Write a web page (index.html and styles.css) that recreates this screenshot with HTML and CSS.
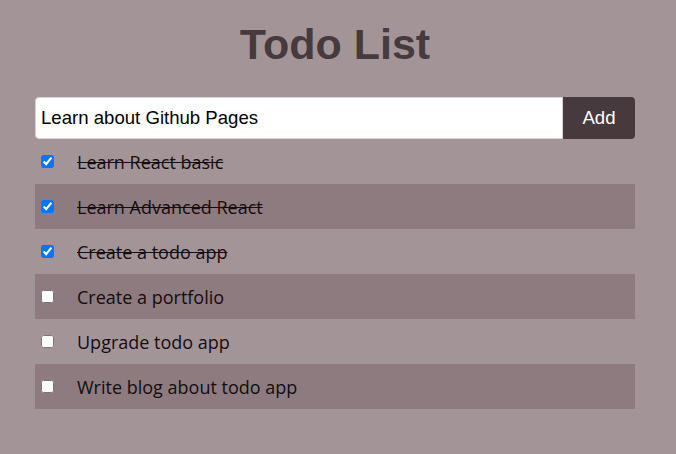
FILE: index.html
```html
<!DOCTYPE html>
<html>
<head>
<meta charset="utf-8">
<link rel="stylesheet" href="styles.css">
</head>
<body>
<div class="app">
  <h1 class="title">Todo List</h1>
  <form class="add-form">
    <input class="add-input" type="text" value="Learn about Github Pages">
    <button class="add-btn" type="button">Add</button>
  </form>
  <ul class="list">
    <li class="item"><input type="checkbox" checked><span class="label done">Learn React basic</span></li>
    <li class="item alt"><input type="checkbox" checked><span class="label done">Learn Advanced React</span></li>
    <li class="item"><input type="checkbox" checked><span class="label done">Create a todo app</span></li>
    <li class="item alt"><input type="checkbox"><span class="label">Create a portfolio</span></li>
    <li class="item"><input type="checkbox"><span class="label">Upgrade todo app</span></li>
    <li class="item alt"><input type="checkbox"><span class="label">Write blog about todo app</span></li>
  </ul>
</div>
</body>
</html>
```
FILE: styles.css
```css
html, body {
  margin: 0;
  padding: 0;
  background: #a39597;
}
.app {
  width: 600px;
  margin: 0 0 0 35px;
  padding-top: 19px;
}
.title {
  margin: 0 0 28px;
  text-align: center;
  font-family: "Liberation Sans", Arial, sans-serif;
  font-weight: bold;
  font-size: 43px;
  line-height: 50px;
  color: #463a3e;
}
.add-form {
  display: flex;
  height: 42px;
  margin: 0;
}
.add-input {
  flex: 1;
  margin: 0;
  border: 1px solid #d8d2d3;
  border-radius: 4px 0 0 4px;
  padding: 0 5px;
  font-family: "Liberation Sans", Arial, sans-serif;
  font-size: 18.6px;
  color: #000;
  background: #fff;
  outline: none;
}
.add-btn {
  width: 72px;
  margin: 0;
  border: none;
  border-radius: 0 4px 4px 0;
  background: #463a3e;
  color: #fff;
  font-family: "Liberation Sans", Arial, sans-serif;
  font-size: 18.6px;
}
.list {
  list-style: none;
  margin: 0;
  padding: 0;
}
.item {
  display: flex;
  align-items: center;
  height: 45px;
  padding-left: 2px;
  gap: 20px;
}
.item.alt {
  background: #8e7b7f;
}
.item input {
  margin: 0 3px 0 4px;
  width: 13px;
  height: 13px;
}
.label {
  font-family: "Open Sans", "Noto Sans", sans-serif;
  font-size: 18px;
  color: #140c0e;
}
.label.done {
  text-decoration: line-through;
}
```
